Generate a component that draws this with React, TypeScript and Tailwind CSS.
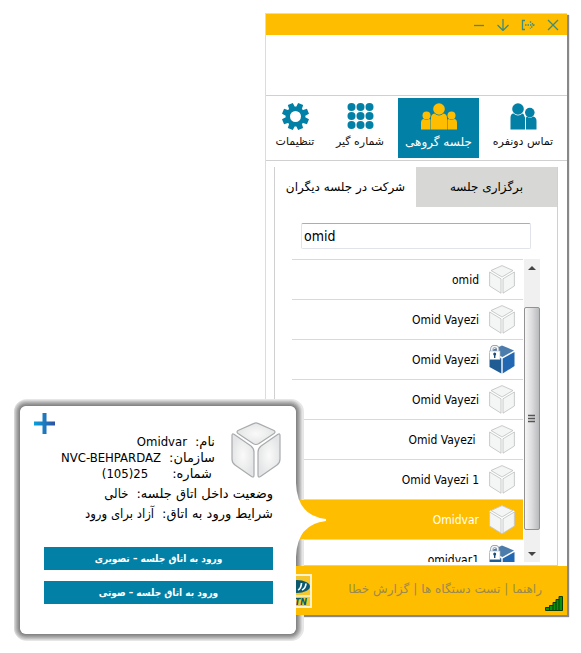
import { useState } from 'react';
import type { ReactNode } from 'react';

type Room = { id: number; name: string; locked?: boolean };

const rooms: Room[] = [
  { id: 1, name: 'omid' },
  { id: 2, name: 'Omid Vayezi' },
  { id: 3, name: 'Omid Vayezi', locked: true },
  { id: 4, name: 'Omid Vayezi' },
  { id: 5, name: 'Omid Vayezi ' },
  { id: 6, name: 'Omid Vayezi 1' },
  { id: 7, name: 'Omidvar' },
  { id: 8, name: 'omidvar1', locked: true },
];

function Cube() {
  return (
    <svg viewBox="0 0 50 56" className="h-14 w-[50px]" aria-hidden="true">
      <defs>
        <radialGradient id="face">
          <stop offset="0" stopColor="#fafafa" />
          <stop offset="1" stopColor="#e4e5e6" />
        </radialGradient>
      </defs>
      <g fill="url(#face)" stroke="#a9abad" strokeWidth="1.2" strokeLinejoin="round">
        <path d="M23 1.4Q25 .4 27 1.400L43 8.500Q45 10 43 11.500L28 21.500Q25 23.500 22 21.500L7 11.500Q5 10 7 8.500Z" />
        <path d="M1 13.500Q1 11 3 12.300L20 24Q23 26.500 23 30V53Q23 56 20.500 54.500L4 43Q1 41 1 37Z" />
        <path d="M49 13.500Q49 11 47 12.300L30 24Q27 26.500 27 30V53Q27 56 29.500 54.500L46 43Q49 41 49 37Z" />
      </g>
    </svg>
  );
}

function SmallCube() {
  return (
    <svg viewBox="0 0 26 29" className="h-[29px] w-[26px]" aria-hidden="true">
      <path d="M13 .5L25.500 6V21L13 28.500L.5 21V6Z" fill="#fff" />
      <g fill="#f4f5f5" stroke="#bcbebf" strokeWidth=".8" strokeLinejoin="round">
        <path d="M13 .6L24 5.500L13 12L2 5.500Z" />
        <path d="M.6 7L12 13.800V28.200L.6 21Z" />
        <path d="M25.400 7L14 13.800V28.200L25.400 21Z" />
      </g>
    </svg>
  );
}

function LockedCube() {
  return (
    <svg viewBox="0 0 26 29" className="h-[29px] w-[26px]" aria-hidden="true">
      <path d="M13 .5L25 5.500L13.500 12L1 6Z" fill="#4c7cab" />
      <path d="M.5 8L12.300 13.500V28.500L.5 22Z" fill="#1f5c94" />
      <path d="M25.500 7L13.700 13.500V28.500L25.500 21Z" fill="#2167b1" />
      <path d="M2.800 6V4Q2.800 1.500 5.800 1.500T8.800 4V6" fill="none" stroke="#7f90a2" strokeWidth="3" />
      <path d="M2.800 6V4Q2.800 1.500 5.800 1.500T8.800 4V6" fill="none" stroke="#f4f6f8" strokeWidth="1.600" />
      <rect x=".6" y="6" width="10.400" height="8.500" fill="#fff" stroke="#a8b4c0" strokeWidth=".6" />
      <circle cx="5.700" cy="9" r="1.500" fill="#1f4c78" />
      <path d="M5 9H6.400V13H5Z" fill="#1f4c78" />
    </svg>
  );
}

function DuoIcon() {
  return (
    <svg viewBox="0 0 27 27" className="h-[27px] w-[27px]" aria-hidden="true">
      <g fill="#0380a6">
        <circle cx="8" cy="6" r="5.800" />
        <path d="M.5 26.500V15Q.5 10.500 3.500 10.500Q8 14.500 12.500 10.500Q14 11 14.500 13.500L15 14.500V26.500Z" />
        <circle cx="19.800" cy="9.600" r="4.800" />
        <path d="M16 26.500V18Q15.500 14 17 13.500Q20 16 23 13.500Q26.500 14 26.500 18V26.500Z" />
      </g>
    </svg>
  );
}

function GroupIcon() {
  return (
    <svg viewBox="0 0 36 27" className="h-[27px] w-[36px]" aria-hidden="true">
      <g fill="#ffbd00">
        <circle cx="18" cy="6" r="5.800" />
        <circle cx="5.500" cy="12.500" r="4" />
        <circle cx="30.500" cy="12.500" r="4" />
        <path d="M10 26.500V15Q10 11 13.500 10.500Q18 14.500 22.500 10.500Q26 11 26 15V26.500Z" />
        <path d="M0 26.500V20Q0 16 3 16Q5.500 18 8 16L9.500 16.500V26.500Z" />
        <path d="M36 26.500V20Q36 16 33 16Q30.500 18 28 16L26.500 16.500V26.500Z" />
      </g>
    </svg>
  );
}

function DialIcon() {
  return (
    <svg viewBox="0 0 27 27" className="h-[27px] w-[27px]" fill="#0380a6" aria-hidden="true">
      {[4, 13, 22].map((y) => [4.5, 13.5, 22.5].map((x) => <circle key={`${x}-${y}`} cx={x} cy={y} r="4" />))}
    </svg>
  );
}

function GearIcon() {
  return (
    <svg viewBox="-14 -14 28 28" className="h-[27px] w-[27px]" aria-hidden="true">
      <circle r="8" fill="none" stroke="#0380a6" strokeWidth="4.600" />
      {[22.5, 67.5, 112.5, 157.5, 202.5, 247.5, 292.5, 337.5].map((a) => (
        <path key={a} d="M-3.200 -9L-2.800 -14H2.800L3.200 -9Z" fill="#0380a6" transform={`rotate(${a})`} />
      ))}
    </svg>
  );
}

function Tool({ icon, label, grow, active }: { icon: ReactNode; label: string; grow: string; active?: boolean }) {
  return (
    <button
      type="button"
      className={`flex h-[60px] min-w-0 basis-0 flex-col items-center gap-1 whitespace-nowrap pt-[5px] leading-4 ${grow} ${
        active ? 'bg-[#0380a6] text-xs text-white' : 'text-[11px] text-[#111]'
      }`}
    >
      {icon}
      <span>{label}</span>
    </button>
  );
}

function TitleBar() {
  return (
    <div className="flex h-[21px] items-center justify-end gap-3 bg-[#ffbd00] pr-2 text-[#3f8c7a]">
      <button type="button" aria-label="Minimize">
        <svg viewBox="0 0 12 12" className="h-3 w-3" stroke="currentColor" strokeWidth="1.3"><path d="M1 6.500H11" /></svg>
      </button>
      <button type="button" aria-label="Send to tray">
        <svg viewBox="0 0 12 12" className="h-3 w-3" stroke="currentColor" strokeWidth="1.3" fill="none"><path d="M6 0V11.500M.5 6L6 11.500L11.500 6" /></svg>
      </button>
      <button type="button" aria-label="Sign out">
        <svg viewBox="0 0 14 12" className="h-3 w-[14px]" stroke="currentColor" strokeWidth="1.3" fill="none">
          <path d="M4 1.500H1.500V10.500H4" />
          <path d="M4 6H13M9 2.500L13 6L9 9.500" strokeDasharray="1.500 1" />
        </svg>
      </button>
      <button type="button" aria-label="Close">
        <svg viewBox="0 0 12 12" className="h-3 w-3" stroke="currentColor" strokeWidth="1.3"><path d="M1 1L11 11M11 1L1 11" /></svg>
      </button>
    </div>
  );
}

function ScrollBar() {
  return (
    <div className="flex w-4 shrink-0 flex-col bg-[#f0f0f0]" aria-hidden="true">
      <div className="flex h-12 justify-center pt-[7px]">
        <svg viewBox="0 0 8 4" className="h-1 w-2"><path d="M0 4L4 0L8 4Z" fill="#444" /></svg>
      </div>
      <div className="flex h-[223px] items-center justify-center rounded-xs border border-[#929292] bg-linear-to-r from-[#f6f6f6] via-[#dcdcde] to-[#b9babd]">
        <svg viewBox="0 0 8 9" className="h-[9px] w-2" stroke="#555" strokeWidth="1.500"><path d="M0 1.500H7M0 4.500H7M0 7.500H7" /></svg>
      </div>
      <div className="flex grow items-end justify-center pb-[6px]">
        <svg viewBox="0 0 8 4" className="h-1 w-2"><path d="M0 0L4 4L8 0Z" fill="#444" /></svg>
      </div>
    </div>
  );
}

function RoomList({ selected, onSelect }: { selected: number; onSelect: (id: number) => void }) {
  return (
    <div className="mx-[17px] mt-[10px] flex h-[303px]">
      <ul className="min-w-0 grow overflow-hidden pr-px">
        {rooms.map((room) => (
          <li key={room.id} className="border-t border-[#d9d9d9]">
            <button
              type="button"
              onClick={() => onSelect(room.id)}
              className={`flex h-[39px] w-full items-center justify-end gap-[10px] whitespace-pre pr-2 text-xs ${
                room.id === selected ? 'relative z-20 bg-[#ffbd00] text-white' : 'text-black'
              }`}
            >
              <span>{room.name}</span>
              {room.locked ? <LockedCube /> : <SmallCube />}
            </button>
          </li>
        ))}
      </ul>
      <ScrollBar />
    </div>
  );
}

function Footer() {
  return (
    <footer className="relative z-20 flex h-[49px] items-center bg-[#ffbd00] pl-3 pr-[25px]">
      <svg viewBox="0 0 34 34" className="h-[34px] w-[34px] shrink-0" aria-hidden="true">
        <rect x="1" y="1" width="32" height="32" fill="#f6c72c" stroke="#fff3cf" strokeWidth="2" />
        <ellipse cx="19" cy="12.500" rx="13" ry="6.500" fill="#0d5a70" />
        <path d="M20 16Q23 15 23.500 9M24 16Q27.500 14.500 28 9.500" stroke="#fff" strokeWidth="1.700" fill="none" />
        <path d="M2 22H32" stroke="#fff3cf" strokeWidth="1.500" />
        <text x="29" y="30.500" textAnchor="end" fontSize="9" fontStyle="italic" fontWeight="bold" fill="#0d5a70">MTN</text>
      </svg>
      <nav dir="rtl" className="flex grow justify-start gap-1 whitespace-nowrap pb-1 font-['DejaVu_Sans',sans-serif] text-xs text-[#9c8a50]">
        <a href="#help">راهنما</a>
        <span>|</span>
        <a href="#devices">تست دستگاه ها</a>
        <span>|</span>
        <a href="#report">گزارش خطا</a>
      </nav>
      <svg viewBox="0 0 18 15" className="absolute bottom-1 right-1 h-[15px] w-[18px]" aria-hidden="true">
        <path d="M.5 11.500H4.500V9.500H8V6.500H11V3.500H14V.5H17.500V14.500H.5Z" fill="#089010" stroke="#0d3b0a" />
        <path d="M4.500 11V14M8 9V14M11 6V14M14 3V14" stroke="#0d3b0a" />
      </svg>
    </footer>
  );
}

function AppWindow() {
  const [query, setQuery] = useState('omid');
  const [selected, setSelected] = useState(7);
  return (
    <main className="w-full border-l border-t border-[#dcdcdc] bg-white shadow-[2px_2px_1px_#888]">
      <TitleBar />
      <div className="h-[60px]" />
      <div dir="rtl" className="flex border-y border-[#d0d0d0] py-[2px] pl-[2px] font-['DejaVu_Sans',sans-serif]">
        <Tool grow="grow-88" icon={<DuoIcon />} label="تماس دونفره" />
        <Tool grow="grow-81" icon={<GroupIcon />} label="جلسه گروهی" active />
        <Tool grow="grow-76" icon={<DialIcon />} label="شماره گیر" />
        <Tool grow="grow-54" icon={<GearIcon />} label="تنظیمات" />
      </div>
      <section className="ml-2 mr-[9px] mt-[6px] border-x border-b border-[#d0d0d0] pb-[3px]">
        <div dir="rtl" role="tablist" className="grid h-10 grid-cols-2 font-['DejaVu_Sans',sans-serif] text-xs">
          <button type="button" role="tab" aria-selected="false" className="bg-[#d7d7d5]">برگزاری جلسه</button>
          <button type="button" role="tab" aria-selected="true">شرکت در جلسه دیگران</button>
        </div>
        <div className="px-[26px] pt-4">
          <input
            type="text"
            aria-label="جستجو"
            value={query}
            onChange={(e) => setQuery(e.target.value)}
            className="block h-[26px] w-full rounded-xs border border-[#e0e3ea] border-t-[#abadb3] px-[2px] text-sm outline-none"
          />
        </div>
        <RoomList selected={selected} onSelect={setSelected} />
      </section>
      <Footer />
    </main>
  );
}

function Field({ label, value }: { label: string; value: string }) {
  return (
    <div className="flex gap-2">
      <dt className="font-['DejaVu_Sans',sans-serif]">{label}:</dt>
      <dd dir="auto">{value}</dd>
    </div>
  );
}

function RoomCard() {
  return (
    <>
      <div className="absolute left-5 top-[406px] z-10 h-[228px] w-[276px] rounded-md shadow-[0_0_0_1px_#858585,0_0_0_2px_#929292,0_0_0_3px_#a0a0a0,0_0_0_4px_#b0b0b0,0_0_0_5px_#c2c2c2,0_0_0_6px_#d6d6d6,1px_0_0_7px_#e6e6e6]" />
      <aside className="absolute left-5 top-[406px] z-30 h-[228px] w-[276px] rounded-md bg-white pr-[15px] pt-4">
        <svg viewBox="0 0 30 74" className="absolute left-full top-[77px] h-[74px] w-[30px]" aria-hidden="true">
          <path d="M0 0Q1 33 30 36V38Q1 41 0 74Z" fill="#fff" />
        </svg>
        <button type="button" aria-label="افزودن" className="absolute left-[14px] top-[7px]">
          <svg viewBox="0 0 21 21" className="h-[21px] w-[21px]">
            <defs>
              <linearGradient id="plus">
                <stop offset="0" stopColor="#0aa0dc" />
                <stop offset="1" stopColor="#3050a0" />
              </linearGradient>
            </defs>
            <path d="M8.500 0H12.500V8.500H21V12.500H12.500V21H8.500V12.500H0V8.500H8.500Z" fill="url(#plus)" />
          </svg>
        </button>
        <div dir="rtl" className="flex gap-4">
          <Cube />
          <dl className="pt-3 text-[13px] leading-4">
            <Field label="نام" value="Omidvar" />
            <Field label="سازمان" value="NVC-BEHPARDAZ" />
            <div className="flex gap-6 pr-[3px]">
              <dt className="font-['DejaVu_Sans',sans-serif]">شماره:</dt>
              <dd dir="ltr">(105)25</dd>
            </div>
          </dl>
        </div>
        <dl dir="rtl" className="pr-2 pt-[2px] text-[13px] leading-5">
          <Field label="وضعیت داخل اتاق جلسه" value="خالی" />
          <Field label="شرایط ورود به اتاق" value="آزاد برای ورود" />
        </dl>
        <div className="flex flex-col gap-[11px] pl-6 pr-2 pt-[23px] text-[10px] font-bold text-white">
          <button type="button" className="h-[23px] bg-[#0380a6]">ورود به اتاق جلسه – تصویری</button>
          <button type="button" className="h-[23px] bg-[#0380a6]">ورود به اتاق جلسه – صوتی</button>
        </div>
      </aside>
    </>
  );
}

export default function App() {
  return (
    <div className="relative min-h-screen bg-white pb-[38px] pl-[265px] pr-[14px] pt-[13px] font-['DejaVu_Sans_Condensed','DejaVu_Sans',sans-serif]">
      <AppWindow />
      <RoomCard />
    </div>
  );
}
